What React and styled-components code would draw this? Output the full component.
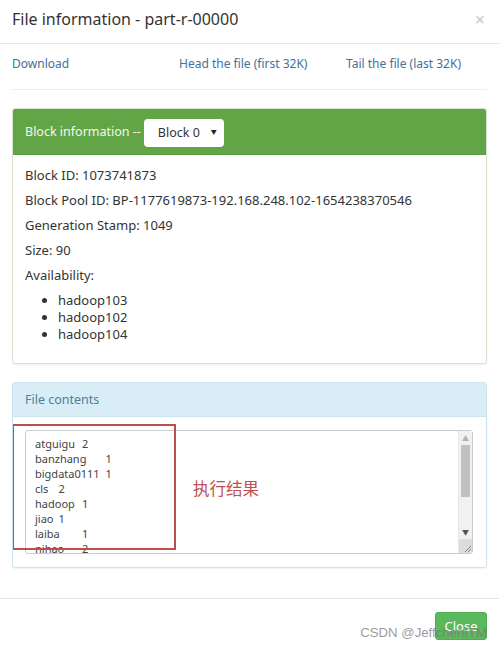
import React from "react";
import styled, { createGlobalStyle } from "styled-components";

const Global = createGlobalStyle`
  html, body { margin: 0; padding: 0; background: #fff; }
  body { font-family: "Noto Sans", "Noto Sans CJK SC", sans-serif; color: #333; }
  * { box-sizing: border-box; }
`;

const Modal = styled.div`
  position: relative;
  width: 499px;
  height: 645px;
  background: #fff;
  overflow: hidden;
`;

const Header = styled.div`
  display: flex;
  align-items: center;
  justify-content: space-between;
  height: 44px;
  padding: 0 12px 6px;
  border-bottom: 1px solid #e8e8e8;
`;

const Title = styled.h4`
  margin: 0;
  font-size: 16px;
  font-weight: 400;
  line-height: 26px;
  color: #333;
`;

const CloseX = styled.span`
  font-size: 18px;
  color: #c8c8c8;
  line-height: 1;
  margin-right: 2px;
`;

const Body = styled.div`
  padding: 0 12px;
`;

const Links = styled.div`
  display: grid;
  grid-template-columns: 167px 167px 1fr;
  padding: 10px 0 15px;
  border-bottom: 1px solid #eee;
`;

const Link = styled.a`
  font-size: 12px;
  line-height: 20px;
  color: #42709c;
  text-decoration: none;
`;

const Panel = styled.div`
  margin-top: 18px;
  border: 1px solid ${(p) => p.$border};
  border-radius: 3px;
  box-shadow: 0 1px 2px rgba(0, 0, 0, 0.06);
  overflow: hidden;
`;

const PanelHeading = styled.div`
  display: flex;
  align-items: center;
  gap: 3px;
  height: ${(p) => p.$h}px;
  padding: 0 12px;
  background: ${(p) => p.$bg};
  color: ${(p) => p.$fg};
  font-size: 12.5px;
  border-bottom: 1px solid ${(p) => p.$border};
`;

const Select = styled.div`
  display: flex;
  align-items: center;
  justify-content: space-between;
  width: 80px;
  height: 28px;
  padding: 0 7px 0 14px;
  background: #fff;
  border-radius: 4px;
  color: #333;
  font-size: 12.5px;
  margin-top: 2px;
`;

const Caret = styled.span`
  font-size: 6px;
  color: #222;
  margin-top: -2px;
`;

const PanelBody = styled.div`
  padding: ${(p) => p.$pad};
`;

const Para = styled.p`
  margin: 0 0 5px;
  font-size: 13px;
  line-height: 20px;
`;

const List = styled.ul`
  margin: 0;
  padding: 2px 0 0 33px;
  font-size: 13px;
  line-height: 17px;
`;

const TextBox = styled.div`
  position: relative;
  display: flex;
  height: 124px;
  border: 1px solid #ccc;
  border-radius: 3px;
  background: #fff;
`;

const Content = styled.pre`
  flex: 1;
  margin: 0;
  padding: 5px 9px;
  font-family: "Noto Sans", sans-serif;
  font-size: 11px;
  line-height: 15px;
  color: #444;
  tab-size: 23.5px;
  overflow: hidden;
`;

const ScrollBar = styled.div`
  display: flex;
  flex-direction: column;
  width: 14px;
  background: #f1f1f1;
  border-left: 1px solid #e6e6e6;
`;

const Arrow = styled.div`
  height: 14px;
  display: flex;
  align-items: center;
  justify-content: center;
  color: ${(p) => p.$c};
  font-size: 7px;
`;

const Thumb = styled.div`
  height: 52px;
  margin: 0 2px;
  background: #c1c1c1;
`;

const Spacer = styled.div`
  flex: 1;
`;

const Grip = styled.div`
  height: 14px;
  background: #dcdcdc;
  display: flex;
  align-items: flex-end;
  justify-content: flex-end;
`;

const RedBox = styled.div`
  position: absolute;
  left: -14px;
  top: -7px;
  width: 164px;
  height: 126px;
  border: 2px solid #b8504e;
  pointer-events: none;
`;

const Note = styled.span`
  position: absolute;
  left: 167px;
  top: 45px;
  font-family: "Noto Sans CJK SC", sans-serif;
  font-size: 16.5px;
  color: #c0504d;
`;

const Footer = styled.div`
  margin-top: 30px;
  border-top: 1px solid #e5e5e5;
  display: flex;
  justify-content: flex-end;
  padding: 13px 12px;
`;

const Button = styled.button`
  width: 52px;
  height: 28px;
  border: 1px solid #4cae4c;
  border-radius: 3px;
  background: #5cb85c;
  color: #fff;
  font-family: inherit;
  font-size: 13px;
  padding: 0;
`;

const Watermark = styled.span`
  position: absolute;
  right: 12px;
  bottom: 5px;
  font-family: "Liberation Sans", sans-serif;
  font-size: 13.2px;
  color: rgba(120, 120, 120, 0.75);
  pointer-events: none;
`;

const rows = [
  "atguigu\t2",
  "banzhang\t1",
  "bigdata0111\t1",
  "cls\t2",
  "hadoop\t1",
  "jiao\t1",
  "laiba\t1",
  "nihao\t2",
];

export default function App() {
  return (
    <Modal>
      <Global />
      <Header>
        <Title>File information - part-r-00000</Title>
        <CloseX>×</CloseX>
      </Header>
      <Body>
        <Links>
          <Link href="#">Download</Link>
          <Link href="#">Head the file (first 32K)</Link>
          <Link href="#">Tail the file (last 32K)</Link>
        </Links>
        <Panel $border="#d6e4cf">
          <PanelHeading $h={46} $bg="#62a546" $fg="#f2f8ee" $border="#5a9a40">
            Block information --
            <Select>
              Block 0<Caret>▼</Caret>
            </Select>
          </PanelHeading>
          <PanelBody $pad="10px 12px 20px">
            <Para>Block ID: 1073741873</Para>
            <Para>Block Pool ID: BP-1177619873-192.168.248.102-1654238370546</Para>
            <Para>Generation Stamp: 1049</Para>
            <Para>Size: 90</Para>
            <Para>Availability:</Para>
            <List>
              <li>hadoop103</li>
              <li>hadoop102</li>
              <li>hadoop104</li>
            </List>
          </PanelBody>
        </Panel>
        <Panel $border="#c9e6f0">
          <PanelHeading $h={34} $bg="#d9edf7" $fg="#4f7f99" $border="#c9e6f0">
            File contents
          </PanelHeading>
          <PanelBody $pad="13px 13px 13px 12px">
            <TextBox>
              <Content>{rows.join("\n")}</Content>
              <ScrollBar>
                <Arrow $c="#b0b0b0">▲</Arrow>
                <Thumb />
                <Spacer />
                <Arrow $c="#505050">▼</Arrow>
                <Grip>
                  <svg width="10" height="10" viewBox="0 0 10 10">
                    <path d="M9 3 L3 9 M9 6 L6 9" stroke="#888" strokeWidth="1" />
                  </svg>
                </Grip>
              </ScrollBar>
              <RedBox />
              <Note>执行结果</Note>
            </TextBox>
          </PanelBody>
        </Panel>
      </Body>
      <Footer>
        <Button>Close</Button>
      </Footer>
      <Watermark>CSDN @JeffchenITM</Watermark>
    </Modal>
  );
}
